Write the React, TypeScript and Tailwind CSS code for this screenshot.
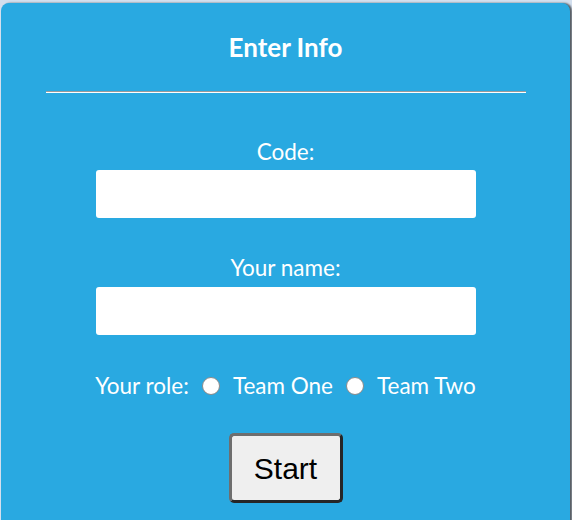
import React from "react";

function Radio({ label }: { label: string }) {
  return (
    <label className="flex items-center gap-[13px]">
      <span className="block w-[18px] h-[18px] rounded-full bg-white border border-[#8a8a8a]" />
      <span>{label}</span>
    </label>
  );
}

export default function App() {
  return (
    <div className="w-[572px] h-[520px] overflow-hidden bg-[#d3dfee] pt-[3px] pl-[1px]">
      <div
        className="w-[569px] h-[540px] rounded-lg bg-[#29a9e1] text-white flex flex-col items-center shadow-[2px_0_2px_rgba(0,0,0,0.6)]"
        style={{ fontFamily: "Lato, 'Open Sans', sans-serif" }}
      >
        <h2 className="mt-[29px] text-[26px] leading-[30px] font-bold">Enter Info</h2>
        <div className="mt-[29px] w-[480px] border-t border-t-[#9a9a9a] border-b border-b-white" />
        <div className="mt-[45px] text-[22.5px] leading-[28px]">Code:</div>
        <div className="mt-[4px] w-[380px] h-[48px] bg-white rounded-[3px]" />
        <div className="mt-[36px] text-[22.5px] leading-[28px]">Your name:</div>
        <div className="mt-[5px] w-[380px] h-[48px] bg-white rounded-[3px]" />
        <div className="mt-[37px] text-[22.5px] leading-[28px] flex items-center gap-[13px]">
          <span>Your role:</span>
          <Radio label="Team One" />
          <Radio label="Team Two" />
        </div>
        <button
          className="mt-[33px] w-[114px] h-[70px] rounded-[5px] bg-[#efefef] text-black text-[30px] border-[3px] border-t-[#6e6e6e] border-l-[#6e6e6e] border-b-[#262626] border-r-[#262626]"
          style={{ fontFamily: "'Liberation Sans', Arial, sans-serif" }}
        >
          Start
        </button>
      </div>
    </div>
  );
}
